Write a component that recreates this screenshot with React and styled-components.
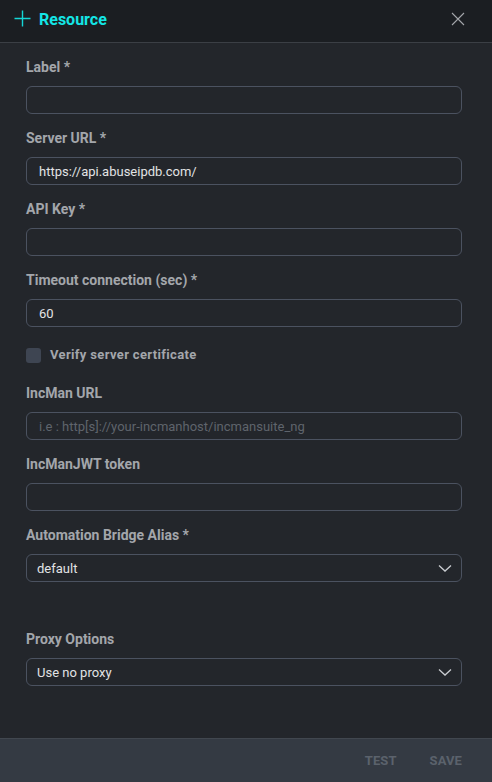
import styled, { createGlobalStyle } from "styled-components";

const GlobalStyle = createGlobalStyle`
  html, body {
    margin: 0;
    padding: 0;
    background: #23262b;
  }
  * {
    box-sizing: border-box;
  }
`;

const Panel = styled.div`
  font-family: Roboto, "Liberation Sans", sans-serif;
  width: 492px;
  height: 782px;
  display: flex;
  flex-direction: column;
  background: #23262b;
`;

const Header = styled.div`
  height: 43px;
  flex-shrink: 0;
  display: flex;
  align-items: center;
  padding: 0 27px 0 14px;
  background: #1b1e22;
  border-bottom: 1px solid #3b3f45;
`;

const Title = styled.h1`
  margin: -2px 0 0 8px;
  font-size: 16px;
  font-weight: 700;
  color: #14e6e6;
  flex: 1;
  line-height: 20px;
`;

const IconBtn = styled.button`
  background: transparent;
  border: none;
  padding: 0;
  display: flex;
  align-items: center;
  cursor: pointer;
  margin-top: -4px;
`;

const Body = styled.div`
  flex: 1;
  display: flex;
  flex-direction: column;
  padding: 16px 30px 0 26px;
`;

const Field = styled.div`
  display: flex;
  flex-direction: column;
  margin-top: ${({ $mt }) => ($mt ? $mt : "0")};
  margin-bottom: 16px;
`;

const Label = styled.label`
  font-size: 14px;
  font-weight: 700;
  line-height: 16px;
  color: #a3a6ab;
  margin-bottom: 11px;
`;

const Input = styled.input`
  width: 100%;
  height: 28px;
  border: 1px solid #4b5260;
  border-radius: 6px;
  background: transparent;
  color: #e2e3e5;
  font-family: Roboto, "Liberation Sans", sans-serif;
  font-size: 13px;
  padding: 0 12px;
  outline: none;
  &::placeholder {
    color: #5f646c;
  }
`;

const SelectBox = styled.div`
  height: 28px;
  border: 1px solid #4b5260;
  border-radius: 6px;
  display: flex;
  align-items: center;
  justify-content: space-between;
  padding: 0 8px 0 10px;
  color: #e2e3e5;
  font-size: 13px;
`;

const CheckRow = styled.div`
  display: flex;
  align-items: center;
  gap: 9px;
  margin: 4px 0 22px;
`;

const CheckBox = styled.span`
  width: 15px;
  height: 15px;
  border-radius: 3px;
  background: #3e4552;
`;

const CheckLabel = styled.span`
  font-size: 13px;
  font-weight: 700;
  color: #a3a6ab;
  line-height: 16px;
  letter-spacing: 0.35px;
`;

const Footer = styled.div`
  height: 44px;
  flex-shrink: 0;
  display: flex;
  align-items: center;
  justify-content: flex-end;
  gap: 33px;
  padding: 0 30px 0 0;
  background: #343a43;
  border-top: 1px solid #41474f;
`;

const FooterBtn = styled.button`
  background: transparent;
  border: none;
  padding: 0;
  font-family: Roboto, "Liberation Sans", sans-serif;
  font-size: 13px;
  font-weight: 700;
  color: #5b626c;
  letter-spacing: 0.1px;
`;

const Chevron = () => (
  <svg width="16" height="16" viewBox="0 0 16 16">
    <path d="M2 5.5 L8 11 L14 5.5" fill="none" stroke="#c9ccd0" strokeWidth="1.3" />
  </svg>
);

const fields = [
  { label: "Label *", value: "" },
  { label: "Server URL *", value: "https://api.abuseipdb.com/" },
  { label: "API Key *", value: "" },
  { label: "Timeout connection (sec) *", value: "60" },
];

const App = () => (
  <>
    <GlobalStyle />
    <Panel>
      <Header>
        <svg width="17" height="17" viewBox="0 0 17 17" style={{ marginTop: -5 }}>
          <path d="M8.5 0.5 V16.5 M0.5 8.5 H16.5" stroke="#14d6d6" strokeWidth="1.4" />
        </svg>
        <Title>Resource</Title>
        <IconBtn>
          <svg width="14" height="14" viewBox="0 0 14 14">
            <path d="M1 1 L13 13 M13 1 L1 13" stroke="#a4a7ab" strokeWidth="1.1" />
          </svg>
        </IconBtn>
      </Header>
      <Body>
        {fields.map((f) => (
          <Field key={f.label}>
            <Label>{f.label}</Label>
            <Input defaultValue={f.value} />
          </Field>
        ))}
        <CheckRow>
          <CheckBox />
          <CheckLabel>Verify server certificate</CheckLabel>
        </CheckRow>
        <Field>
          <Label>IncMan URL</Label>
          <Input placeholder="i.e : http[s]://your-incmanhost/incmansuite_ng" />
        </Field>
        <Field>
          <Label>IncManJWT token</Label>
          <Input />
        </Field>
        <Field>
          <Label>Automation Bridge Alias *</Label>
          <SelectBox>
            default
            <Chevron />
          </SelectBox>
        </Field>
        <Field $mt="33px">
          <Label>Proxy Options</Label>
          <SelectBox>
            Use no proxy
            <Chevron />
          </SelectBox>
        </Field>
      </Body>
      <Footer>
        <FooterBtn>TEST</FooterBtn>
        <FooterBtn>SAVE</FooterBtn>
      </Footer>
    </Panel>
  </>
);

export default App;
